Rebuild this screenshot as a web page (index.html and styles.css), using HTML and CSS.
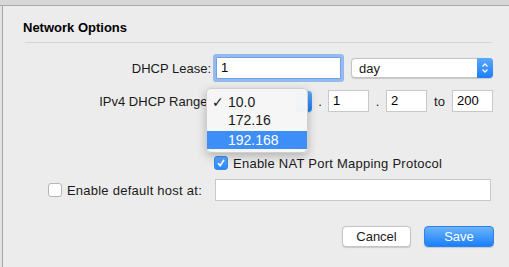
FILE: index.html
```html
<!DOCTYPE html>
<html lang="en">
<head>
  <meta charset="UTF-8" />
  <title>Network Options</title>
  <link rel="stylesheet" href="styles.css">
</head>
<body>
  <div class="titlebar"></div>
  <div class="window">
    <h1 class="heading">Network Options</h1>
    <div class="rule"></div>

    <div class="row row-lease">
      <label class="label">DHCP Lease:</label>
      <div class="field focused">1</div>
      <div class="select select-day">
        <span>day</span>
        <span class="stepper">
          <svg width="8" height="12" viewBox="0 0 8 12"><path d="M1.5 4.5 L4 2 L6.5 4.5 M1.5 7.5 L4 10 L6.5 7.5" fill="none" stroke="#fff" stroke-width="1.3"/></svg>
        </span>
      </div>
    </div>

    <div class="row row-range">
      <label class="label">IPv4 DHCP Range:</label>
      <div class="select select-prefix">
        <span class="stepper">
          <svg width="8" height="12" viewBox="0 0 8 12"><path d="M1.5 4.5 L4 2 L6.5 4.5 M1.5 7.5 L4 10 L6.5 7.5" fill="none" stroke="#fff" stroke-width="1.3"/></svg>
        </span>
        <ul class="menu">
          <li class="menu-item"><span class="check">✓</span>10.0</li>
          <li class="menu-item">172.16</li>
          <li class="menu-item active">192.168</li>
        </ul>
      </div>
      <span class="sep">.</span>
      <div class="field small">1</div>
      <span class="sep sep-2">.</span>
      <div class="field small">2</div>
      <span class="sep sep-to">to</span>
      <div class="field small">200</div>
    </div>

    <div class="row row-nat">
      <span class="checkbox checked">
        <svg width="10" height="10" viewBox="0 0 10 10"><path d="M2 5.2 L4.2 7.6 L8 1.8" fill="none" stroke="#fff" stroke-width="1.6"/></svg>
      </span>
      <span class="check-label">Enable NAT Port Mapping Protocol</span>
    </div>

    <div class="row row-host">
      <div class="label host-label">
        <span class="checkbox"></span>
        <span class="check-label">Enable default host at:</span>
      </div>
      <div class="field wide"></div>
    </div>

    <div class="buttons">
      <button class="btn">Cancel</button>
      <button class="btn primary">Save</button>
    </div>
  </div>
</body>
</html>
```

FILE: styles.css
```css
body {
  margin: 0;
  background-color: #e2e2e2;
  font-family: 'Liberation Sans', Arial, sans-serif;
  font-size: 13px;
  color: #1a1a1a;
  overflow: hidden;
}
.titlebar {
  height: 5px;
  background-color: #d7d7d7;
  border-bottom: 1px solid #a9a9a9;
}
.window {
  margin-left: 2px;
  border-left: 1px solid #a6a6a6;
  background-color: #ececec;
  height: 261px;
  padding-right: 15px;
}
.heading {
  margin: 0;
  padding: 14px 0 0 20px;
  font-size: 13px;
  line-height: 16px;
  font-weight: bold;
  color: #000;
}
.rule {
  margin: 6px 0 0 22px;
  width: 467px;
  height: 1px;
  background-color: #d4d4d4;
}
.row {
  display: flex;
  align-items: center;
}
.label {
  width: 208px;
  margin-right: 5px;
  text-align: right;
  flex-shrink: 0;
}
.row-lease {
  margin-top: 11px;
  height: 28px;
}
.row-range {
  margin-top: 8px;
  height: 22px;
}
.row-nat {
  margin-top: 43px;
  height: 16px;
  padding-left: 211px;
}
.row-host {
  margin-top: 8px;
  height: 22px;
}
.field {
  box-sizing: border-box;
  height: 22px;
  background: #fff;
  border: 1px solid #c8c8c8;
  padding: 0 4px;
  line-height: 20px;
  color: #000;
}
.field.focused {
  width: 125px;
  border-color: #6ea4ea;
  box-shadow: 0 0 0 3px rgba(122, 170, 238, 0.75);
  border-radius: 1px;
}
.field.small {
  width: 41px;
}
.field.wide {
  width: 276px;
}
.select {
  position: relative;
  box-sizing: border-box;
  height: 20px;
  background: #fff;
  border: 1px solid #c4c4c4;
  border-radius: 4px;
  display: flex;
  align-items: center;
  padding-left: 7px;
  box-shadow: 0 0.5px 1px rgba(0, 0, 0, 0.15);
}
.select-day {
  width: 142px;
  margin-left: 10px;
}
.select-prefix {
  width: 96px;
  height: 21px;
}
.stepper {
  position: absolute;
  right: -1px;
  top: -1px;
  bottom: -1px;
  width: 16px;
  border-radius: 0 4px 4px 0;
  background: linear-gradient(#5aa8fb, #1b7ffa);
  display: flex;
  align-items: center;
  justify-content: center;
}
.menu {
  position: absolute;
  left: -11px;
  top: -4px;
  width: 100px;
  margin: 0;
  padding: 4px 0 3px;
  list-style: none;
  background: rgba(246, 246, 246, 0.98);
  border: 1px solid #cfcfcf;
  border-radius: 5px;
  box-shadow: 0 3px 10px rgba(0, 0, 0, 0.25);
  z-index: 2;
}
.menu-item {
  height: 18px;
  line-height: 18px;
  padding-left: 21px;
  position: relative;
  color: #1a1a1a;
  font-size: 14px;
}
.menu-item.active {
  margin-top: 2px;
  background-color: #3d8ef6;
  color: #fff;
}
.check {
  position: absolute;
  left: 5px;
  top: 0;
  font-family: 'DejaVu Sans', sans-serif;
  font-size: 14px;
}
.sep {
  width: 16px;
  text-align: center;
}
.sep-2 {
  width: 17px;
}
.sep-to {
  width: 25px;
}
.checkbox {
  box-sizing: border-box;
  width: 14px;
  height: 14px;
  border: 1px solid #b5b5b5;
  border-radius: 3px;
  background: #fff;
  display: inline-flex;
  align-items: center;
  justify-content: center;
  flex-shrink: 0;
}
.checkbox.checked {
  background: linear-gradient(#5aa8fb, #2a88f8);
  border-color: #3a8ae8;
}
.check-label {
  margin-left: 5px;
  letter-spacing: 0.25px;
}
.host-label {
  display: flex;
  align-items: center;
  justify-content: flex-end;
  padding-right: 9px;
  width: 199px;
  margin-right: 4px;
}
.buttons {
  display: flex;
  justify-content: flex-end;
  gap: 13px;
  margin-top: 25px;
}
.btn {
  box-sizing: border-box;
  width: 69px;
  height: 21px;
  font-family: 'Liberation Sans', Arial, sans-serif;
  font-size: 13px;
  color: #1a1a1a;
  background: #fff;
  border: 1px solid #c4c4c4;
  border-radius: 4px;
  box-shadow: 0 0.5px 1px rgba(0, 0, 0, 0.15);
  padding: 0;
}
.btn.primary {
  width: 70px;
  color: #fff;
  border-color: #2b84f0;
  background: linear-gradient(#6cb3fa, #1a80fa);
}
```
